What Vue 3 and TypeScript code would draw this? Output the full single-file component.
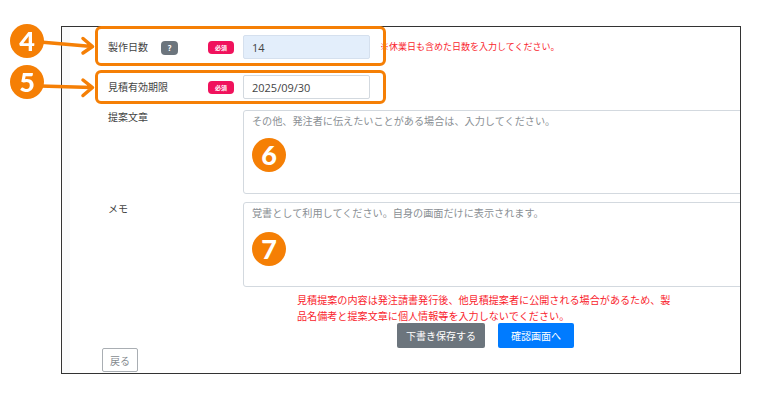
<script setup lang="ts">
import { ref } from 'vue';

const days = ref('14');
const limit = ref('2025/09/30');
const proposal = ref('');
const memo = ref('');
</script>

<template>
  <div class="page">
    <div class="frame">
      <div class="form">
        <div class="row row-days">
          <label class="label">製作日数</label>
          <span class="help">?</span>
          <span class="required">必須</span>
          <input v-model="days" class="field field-active" type="text" />
          <span class="note">※休業日も含めた日数を入力してください。</span>
        </div>
        <div class="row row-limit">
          <label class="label">見積有効期限</label>
          <span class="required">必須</span>
          <input v-model="limit" class="field" type="text" />
        </div>
        <div class="row row-text">
          <label class="label label-wide">提案文章</label>
          <textarea v-model="proposal" class="area" placeholder="その他、発注者に伝えたいことがある場合は、入力してください。"></textarea>
        </div>
        <div class="row row-memo">
          <label class="label label-wide">メモ</label>
          <textarea v-model="memo" class="area area-memo" placeholder="覚書として利用してください。自身の画面だけに表示されます。"></textarea>
        </div>
        <p class="warning">見積提案の内容は発注請書発行後、他見積提案者に公開される場合があるため、製品名備考と提案文章に個人情報等を入力しないでください。</p>
        <div class="actions">
          <button class="btn btn-draft">下書き保存する</button>
          <button class="btn btn-next">確認画面へ</button>
        </div>
        <button class="btn-back">戻る</button>
      </div>
    </div>

    <!-- annotations on top of the screenshot -->
    <div class="outline outline-4"></div>
    <div class="outline outline-5"></div>
    <svg class="arrows" width="110" height="110" viewBox="0 0 110 110" fill="none">
      <g stroke="#f57f05" stroke-width="3.5" stroke-linecap="round" stroke-linejoin="round">
        <path d="M40 42 L92 46.500 M83 38.500 L92.500 46.500 L83 53" />
        <path d="M40 86 L92 87.500 M83 80 L92.500 87.500 L83 95.500" />
      </g>
    </svg>
    <span class="num num-4">4</span>
    <span class="num num-5">5</span>
    <span class="num num-6">6</span>
    <span class="num num-7">7</span>
  </div>
</template>

<style>
html,
body {
  margin: 0;
  background: #fff;
}
</style>

<style scoped>
.page {
  position: relative;
  width: 770px;
  height: 400px;
  overflow: hidden;
  padding: 26px 0 0 61px;
  box-sizing: border-box;
  font-family: "Noto Sans CJK JP", sans-serif;
  font-size: 10px;
  color: #444;
  filter: blur(0.3px);
}

.frame {
  width: 680px;
  height: 348px;
  box-sizing: border-box;
  border: 1px solid #333;
  background: #fff;
  overflow: hidden;
}

.form {
  height: 100%;
  box-sizing: border-box;
  border-left: 8px solid #f8f9fa;
  padding-left: 38px;
  display: flex;
  flex-direction: column;
}

.row {
  display: flex;
  align-items: center;
  height: 24px;
}

.row-days {
  margin-top: 8px;
}

.row-limit {
  margin-top: 16px;
}

.row-text {
  margin-top: 11px;
  height: 84px;
  align-items: flex-start;
}

.row-memo {
  margin-top: 8px;
  height: 85px;
  align-items: flex-start;
}

.label {
  width: 53px;
  flex: none;
  line-height: 14px;
  white-space: nowrap;
}

.label-wide {
  width: 135px;
}

.row-limit .label {
  width: 100px;
}

.help {
  width: 17px;
  height: 14px;
  flex: none;
  margin-top: 2px;
  margin-right: 30px;
  border-radius: 4px;
  background: #6c757d;
  color: #fff;
  font-size: 8px;
  font-weight: 700;
  line-height: 14px;
  text-align: center;
}

.required {
  width: 26px;
  height: 13px;
  flex: none;
  margin-right: 9px;
  border-radius: 4px;
  background: #f0125c;
  color: #fff;
  font-size: 6px;
  font-weight: 700;
  line-height: 13px;
  text-align: center;
}

.field {
  width: 127px;
  height: 24px;
  flex: none;
  box-sizing: border-box;
  border: 1px solid #d3d9df;
  border-radius: 2px;
  padding: 0 8px;
  background: #fff;
  color: #444;
  font-family: "Open Sans", sans-serif;
  font-size: 11px;
  outline: none;
}

.field-active {
  background: #e3eefb;
  border-color: #d5e0ee;
}

.note {
  margin-left: 10px;
  margin-top: -2px;
  color: #f91e2e;
  font-size: 9px;
  white-space: nowrap;
}

.area {
  width: 520px;
  height: 100%;
  flex: none;
  box-sizing: border-box;
  border: 1px solid #d3d9df;
  border-radius: 3px;
  padding: 3px 8px;
  background: #fff;
  font-family: "Noto Sans CJK JP", sans-serif;
  font-size: 10.15px;
  line-height: 14px;
  resize: none;
  outline: none;
}

.area::placeholder {
  color: #8a8f94;
  opacity: 1;
}

.warning {
  width: 378px;
  margin: 5px 0 0 189px;
  color: #f91e2e;
  font-size: 10.1px;
  line-height: 16px;
}

.actions {
  display: flex;
  gap: 13px;
  margin: -1px 0 0 289px;
}

.btn {
  height: 25px;
  box-sizing: border-box;
  border: none;
  border-radius: 2px;
  color: #fff;
  font-family: inherit;
  font-size: 10px;
  padding: 0;
}

.btn-draft {
  width: 88px;
  background: #6c757d;
}

.btn-next {
  width: 76px;
  background: #007bff;
}

.btn-back {
  align-self: flex-start;
  width: 36px;
  height: 24px;
  margin-left: -6px;
  box-sizing: border-box;
  border: 1px solid #a9aeb3;
  border-radius: 2px;
  background: #fff;
  color: #868b90;
  font-family: inherit;
  font-size: 10px;
  padding: 0;
}

.outline {
  position: absolute;
  left: 95px;
  width: 291px;
  box-sizing: border-box;
  border: 3px solid #f57f05;
  border-radius: 6px;
}

.outline-4 {
  top: 26px;
  height: 40px;
}

.outline-5 {
  top: 70px;
  height: 34px;
}

.arrows {
  position: absolute;
  left: 0;
  top: 0;
}

.num {
  position: absolute;
  width: 34px;
  height: 34px;
  border-radius: 50%;
  background: #f57f05;
  color: #fff;
  font-family: "Lato", sans-serif;
  font-size: 27px;
  font-weight: 900;
  line-height: 34px;
  text-align: center;
}

.num-4 {
  left: 10px;
  top: 24px;
}

.num-5 {
  left: 10px;
  top: 65px;
}

.num-6 {
  left: 252px;
  top: 138px;
}

.num-7 {
  left: 252px;
  top: 232px;
}
</style>
